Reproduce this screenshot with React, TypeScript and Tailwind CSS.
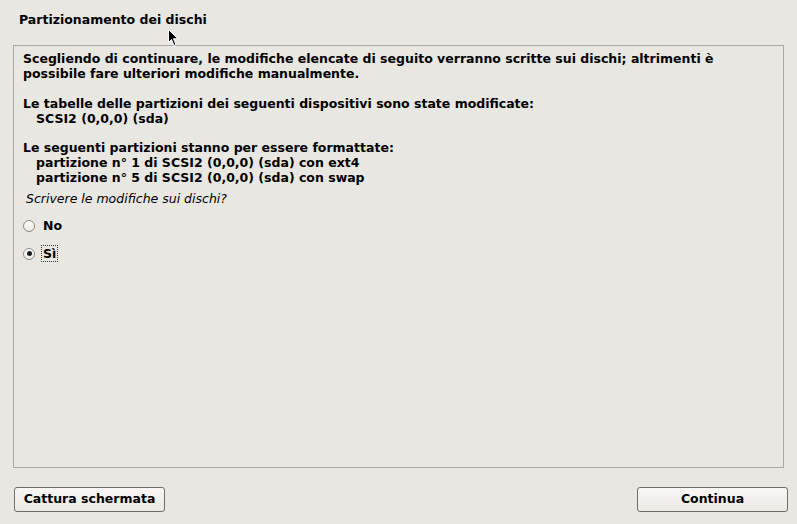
import React, { useState } from 'react';

const FONT = { fontFamily: '"DejaVu Sans", "Liberation Sans", sans-serif' };

function Radio({ checked }: { checked: boolean }) {
  return (
    <span className="flex h-[12px] w-[12px] items-center justify-center rounded-full border border-[#8d8b85] bg-gradient-to-b from-[#fdfdfc] to-[#eceae5]">
      {checked && <span className="h-[5px] w-[5px] rounded-full bg-[#1a1a1a]" />}
    </span>
  );
}

function Cursor() {
  return (
    <svg className="absolute left-[168px] top-[29px]" width="12" height="18" viewBox="0 0 12 18">
      <path d="M0.5 0.5 L0.5 13.5 L3.5 10.5 L6 16.5 L8 15.5 L5.5 9.8 L10 9.8 Z" fill="#000" stroke="#fff" strokeWidth="1" />
    </svg>
  );
}

export default function App() {
  const [choice, setChoice] = useState<'no' | 'si'>('si');

  return (
    <div className="relative flex h-[524px] w-[797px] flex-col bg-[#e8e7e1] text-[12.5px] text-black" style={FONT}>
      <Cursor />
      <div className="px-[19px] pt-[12px] pb-[18px] font-bold leading-[15px]">Partizionamento dei dischi</div>

      <div className="mx-[13px] flex h-[423px] flex-col border border-[#a9a8a2] px-[9px] pt-[6px]">
        <div className="font-bold leading-[14.9px] whitespace-pre">
          {'Scegliendo di continuare, le modifiche elencate di seguito verranno scritte sui dischi; altrimenti è\n' +
            'possibile fare ulteriori modifiche manualmente.\n\n' +
            'Le tabelle delle partizioni dei seguenti dispositivi sono state modificate:\n' +
            '   SCSI2 (0,0,0) (sda)\n\n' +
            'Le seguenti partizioni stanno per essere formattate:\n' +
            '   partizione n° 1 di SCSI2 (0,0,0) (sda) con ext4\n' +
            '   partizione n° 5 di SCSI2 (0,0,0) (sda) con swap'}
        </div>
        <div className="mt-[5px] pl-[3px] italic leading-[15px]">Scrivere le modifiche sui dischi?</div>

        <div className="mt-[11px] flex flex-col gap-[11px]">
          <button onClick={() => setChoice('no')} className="flex items-center gap-[6px] font-bold leading-[15px]">
            <Radio checked={choice === 'no'} />
            <span className="border border-transparent px-[1px]">No</span>
          </button>
          <button onClick={() => setChoice('si')} className="flex items-center gap-[6px] font-bold leading-[15px]">
            <Radio checked={choice === 'si'} />
            <span className="border border-dotted border-[#333] px-[1px]">Sì</span>
          </button>
        </div>
      </div>

      <div className="flex justify-between px-[14px] pt-[19px]">
        <button className="h-[25px] w-[151px] rounded-[3px] border border-[#6f6e6a] bg-gradient-to-b from-[#f8f7f4] to-[#ebe9e4] font-bold">
          Cattura schermata
        </button>
        <button className="mr-[-5px] h-[25px] w-[151px] rounded-[3px] border border-[#6f6e6a] bg-gradient-to-b from-[#f8f7f4] to-[#ebe9e4] font-bold">
          Continua
        </button>
      </div>
    </div>
  );
}
